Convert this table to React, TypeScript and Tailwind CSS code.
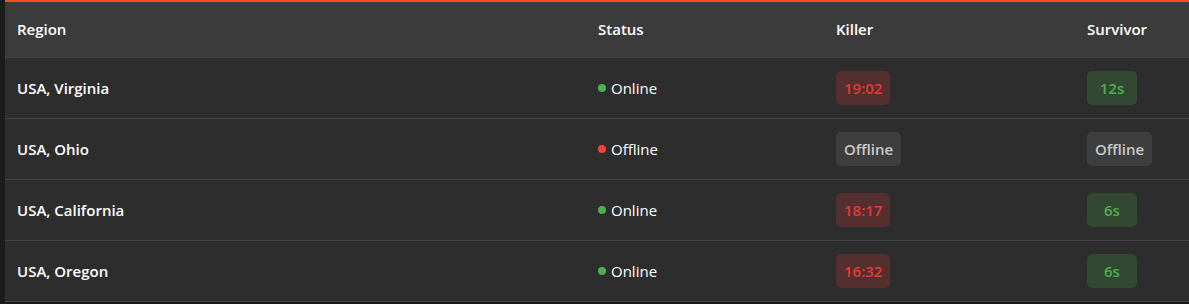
const rows = [
  { region: 'USA, Virginia', online: true, killer: '19:02', survivor: '12s' },
  { region: 'USA, Ohio', online: false, killer: 'Offline', survivor: 'Offline' },
  { region: 'USA, California', online: true, killer: '18:17', survivor: '6s' },
  { region: 'USA, Oregon', online: true, killer: '16:32', survivor: '6s' },
]

const Badge = ({ value, tone }: { value: string; tone: 'red' | 'green' | 'gray' }) => {
  const tones = {
    red: 'bg-[#552f2f] text-[#e53935]',
    green: 'bg-[#334833] text-[#4caf50]',
    gray: 'bg-[#3e3e3e] text-[#c9c9c9]',
  }
  return (
    <span
      className={`inline-flex h-[34px] min-w-[50px] items-center justify-center rounded-[5px] px-2 text-[15px] font-semibold ${tones[tone]}`}
    >
      {value}
    </span>
  )
}

export default function App() {
  const cols = 'grid grid-cols-[581px_238px_251px_1fr]'
  return (
    <div
      className="h-[304px] w-[1189px] overflow-hidden bg-[#1b1b1b] pl-[5px] text-white"
      style={{ fontFamily: '"Open Sans", "Noto Sans", sans-serif' }}
    >
      <div className="border-t-2 border-[#f4511e] bg-[#2d2d2d]">
        <div className={`${cols} h-[56px] items-center border-b border-[#454545] bg-[#3b3b3b] text-[15px] font-semibold`}>
          <div className="pl-3">Region</div>
          <div className="pl-3">Status</div>
          <div className="pl-3">Killer</div>
          <div className="pl-3">Survivor</div>
        </div>
        {rows.map((row) => (
          <div
            key={row.region}
            className={`${cols} h-[61px] items-center border-b border-[#454545] text-[15px]`}
          >
            <div className="pl-3 font-semibold">{row.region}</div>
            <div className="flex items-center gap-[5px] pl-3">
              <span
                className={`h-2 w-2 rounded-full ${row.online ? 'bg-[#4caf50]' : 'bg-[#f44336]'}`}
              />
              <span>{row.online ? 'Online' : 'Offline'}</span>
            </div>
            <div className="pl-3">
              <Badge value={row.killer} tone={row.online ? 'red' : 'gray'} />
            </div>
            <div className="pl-3">
              <Badge value={row.survivor} tone={row.online ? 'green' : 'gray'} />
            </div>
          </div>
        ))}
      </div>
    </div>
  )
}
